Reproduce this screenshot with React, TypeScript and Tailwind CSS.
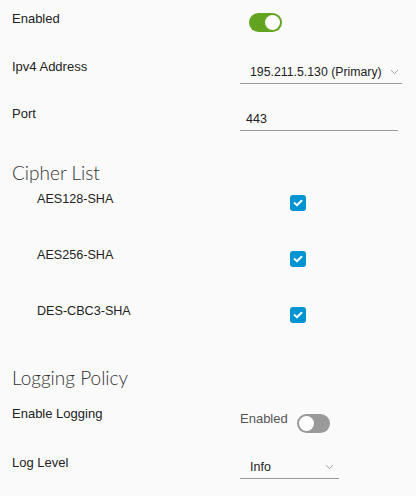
import React from "react";

function Toggle({ on }: { on: boolean }) {
  return (
    <div
      className={`relative h-[19px] w-[33px] rounded-full ${on ? "bg-[#62a420]" : "bg-[#9a9a9a]"}`}
    >
      <div
        className={`absolute top-[2px] h-[15px] w-[15px] rounded-full bg-white ${on ? "right-[2px]" : "left-[2px]"}`}
      />
    </div>
  );
}

function Chevron() {
  return (
    <svg width="9" height="6" viewBox="0 0 9 6" fill="none">
      <path d="M1 1.2 L4.5 4.6 L8 1.2" stroke="#9aa3ab" strokeWidth="1" />
    </svg>
  );
}

function Checkbox() {
  return (
    <div className="flex h-[16px] w-[16px] items-center justify-center rounded-[3px] bg-[#0094d2]">
      <svg width="10" height="8" viewBox="0 0 10 8" fill="none">
        <path d="M1.5 4 L4 6.3 L8.5 1.7" stroke="white" strokeWidth="2" strokeLinecap="round" strokeLinejoin="round" />
      </svg>
    </div>
  );
}

const ciphers = ["AES128-SHA", "AES256-SHA", "DES-CBC3-SHA"];

export default function App() {
  return (
    <div
      className="min-h-screen w-[416px] bg-[#fafafa] px-3 text-[13px] text-[#222]"
      style={{ fontFamily: '"Liberation Sans", Arial, sans-serif' }}
    >
      {/* General */}
      <div className="flex h-[48px]">
        <div className="w-[228px] pt-[10px] leading-[18px]">Enabled</div>
        <div className="pt-[13px] pl-[9px]">
          <Toggle on />
        </div>
      </div>
      <div className="flex h-[48px]">
        <div className="w-[228px] pt-[10px] leading-[18px]">Ipv4 Address</div>
        <div className="pt-[13px]">
          <div className="flex h-[23px] w-[162px] items-center justify-between border-b border-[#9a9a9a] pl-[10px] pr-[3px] text-[12.3px] leading-[22px]">
            <span>195.211.5.130 (Primary)</span>
            <Chevron />
          </div>
        </div>
      </div>
      <div className="flex h-[48px]">
        <div className="w-[228px] pt-[9px] leading-[18px]">Port</div>
        <div className="pt-[12px]">
          <div className="h-[23px] w-[158px] border-b border-[#9a9a9a] pl-[6px] text-[12.5px] leading-[22px]">443</div>
        </div>
      </div>

      {/* Cipher List */}
      <h4
        className="mt-[17px] text-[19px] font-light leading-[24px] text-[#333]"
        style={{ fontFamily: "Lato, sans-serif" }}
      >
        Cipher List
      </h4>
      <div className="mt-[5px]">
        {ciphers.map((c) => (
          <div key={c} className="flex h-[56px]">
            <div className="w-[278px] pl-[25px] text-[12.6px] leading-[18px]">{c}</div>
            <div className="pt-[5px]">
              <Checkbox />
            </div>
          </div>
        ))}
      </div>

      {/* Logging Policy */}
      <h4
        className="mt-[8px] text-[19px] font-light leading-[24px] text-[#333]"
        style={{ fontFamily: "Lato, sans-serif" }}
      >
        Logging Policy
      </h4>
      <div className="flex h-[49px] pt-[15px]">
        <div className="w-[228px] leading-[18px]">Enable Logging</div>
        <div className="flex items-start">
          <span className="mt-[5px] leading-[18px] text-[#555]">Enabled</span>
          <div className="ml-[9px] mt-[9px]">
            <Toggle on={false} />
          </div>
        </div>
      </div>
      <div className="flex h-[48px] pt-[15px]">
        <div className="w-[228px] leading-[18px]">Log Level</div>
        <div className="pt-[2px]">
          <div className="flex h-[23px] w-[99px] items-center justify-between border-b border-[#9a9a9a] pl-[10px] pr-[5px] text-[12.5px] leading-[22px]">
            <span>Info</span>
            <Chevron />
          </div>
        </div>
      </div>
    </div>
  );
}
